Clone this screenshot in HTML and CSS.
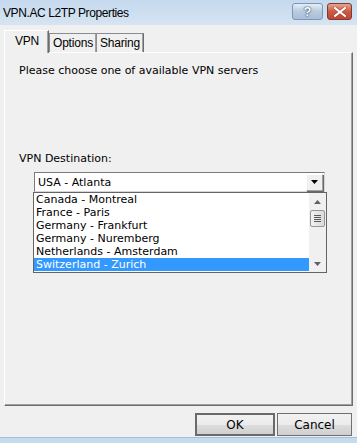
FILE: index.html
```html
<!DOCTYPE html>
<html lang="en">
<head>
  <meta charset="UTF-8" />
  <title>VPN.AC L2TP Properties</title>
  <link rel="stylesheet" href="styles.css">
</head>
<body>
  <div class="window">
    <!-- Title bar -->
    <div class="titlebar">
      <span class="title">VPN.AC L2TP Properties</span>
      <div class="caption-btns">
        <div class="cap-btn help">?</div>
        <div class="cap-btn close">
          <svg width="14" height="10" viewBox="0 0 14 10">
            <path d="M2 1 L12 9 M12 1 L2 9" stroke="#7b3b30" stroke-width="3.4" stroke-linecap="square" opacity="0.5"/>
            <path d="M2 1 L12 9 M12 1 L2 9" stroke="#fff" stroke-width="2" stroke-linecap="square"/>
          </svg>
        </div>
      </div>
    </div>

    <div class="body">
      <div class="tabs">
        <div class="tab active">VPN</div>
        <div class="tab">Options</div>
        <div class="tab">Sharing</div>
      </div>

      <div class="panel">
        <p class="intro">Please choose one of available VPN servers</p>
        <label class="dest-label">VPN Destination:</label>

        <div class="combo">
          <div class="combo-field">
            <span>USA - Atlanta</span>
            <div class="combo-arrow">
              <svg width="7" height="4" viewBox="0 0 7 4"><path d="M0 0 H7 L3.5 4 Z" fill="#000"/></svg>
            </div>
          </div>
          <div class="dropdown">
            <ul class="options">
              <li>Canada - Montreal</li>
              <li>France - Paris</li>
              <li>Germany - Frankfurt</li>
              <li>Germany - Nuremberg</li>
              <li>Netherlands - Amsterdam</li>
              <li class="selected">Switzerland - Zurich</li>
            </ul>
            <div class="scrollbar">
              <div class="sb-arrow">
                <svg width="7" height="4" viewBox="0 0 7 4"><path d="M0 4 H7 L3.5 0 Z" fill="#606060"/></svg>
              </div>
              <div class="sb-track">
                <div class="sb-thumb">
                  <span></span><span></span><span></span><span></span>
                </div>
              </div>
              <div class="sb-arrow">
                <svg width="7" height="4" viewBox="0 0 7 4"><path d="M0 0 H7 L3.5 4 Z" fill="#606060"/></svg>
              </div>
            </div>
          </div>
        </div>
      </div>

      <div class="actions">
        <button class="btn default">OK</button>
        <button class="btn">Cancel</button>
      </div>
    </div>
    <div class="bottom-frame"></div>
  </div>
</body>
</html>
```

FILE: styles.css
```css
* {
  box-sizing: border-box;
}

body {
  margin: 0;
  font-family: Tahoma, 'DejaVu Sans', 'Liberation Sans', sans-serif;
  font-size: 11px;
  color: #000;
}

.window {
  width: 357px;
  height: 443px;
  background: #f0f0f0;
  display: flex;
  flex-direction: column;
}

.titlebar {
  height: 25px;
  background: linear-gradient(to bottom, #c5d9ee, #d6e4f2);
  display: flex;
  align-items: center;
  justify-content: space-between;
  padding: 0 5px 0 3px;
}

.title {
  font-family: 'Segoe UI', 'Liberation Sans', sans-serif;
  font-size: 12px;
  letter-spacing: -0.4px;
  color: #000;
}

.caption-btns {
  display: flex;
  gap: 4px;
  align-self: flex-start;
  margin-top: 3px;
}

.cap-btn {
  height: 17px;
  border-radius: 3px;
  display: flex;
  align-items: center;
  justify-content: center;
}

.cap-btn.help {
  width: 31px;
  background: linear-gradient(to bottom, #e5eef8, #b8cbe0 50%, #a9bfd8);
  border: 1px solid #7f96b3;
  color: #fff;
  font-family: 'Liberation Sans', sans-serif;
  font-weight: bold;
  font-size: 13px;
  text-shadow: 0 0 2px #2c4260, 0 0 1px #2c4260;
}

.cap-btn.close {
  width: 25px;
  background: linear-gradient(to bottom, #e6a591, #cf5a43 50%, #c44531);
  border: 1px solid #7b3b30;
}

.body {
  flex: 1;
  padding: 4px 4px 0 4px;
  display: flex;
  flex-direction: column;
}

.tabs {
  display: flex;
  align-items: flex-end;
  height: 23px;
  padding-left: 1px;
  font-family: 'Liberation Sans', sans-serif;
  font-size: 12px;
  letter-spacing: -0.2px;
}

.tab {
  height: 19px;
  padding: 2px 3px 0 3px;
  background: #f0f0f0;
  border: 1px solid #898c95;
  border-bottom: none;
  border-right-color: #6d6d6d;
  margin-right: -1px;
  box-shadow: inset -1px 0 #a0a0a0;
}

.tab.active {
  height: 23px;
  width: 45px;
  padding: 3px 0 0 10px;
  margin-left: -1px;
  margin-bottom: -1px;
  margin-right: 0;
  border-color: #fff;
  border-right-color: #6d6d6d;
  position: relative;
  z-index: 1;
}

.panel {
  height: 354px;
  border: 1px solid #fff;
  border-right-color: #6d6d6d;
  border-bottom-color: #6d6d6d;
  box-shadow: inset -1px -1px #a0a0a0;
  padding: 11px 0 0 14px;
}

.intro {
  margin: 0;
}

.dest-label {
  display: block;
  margin-top: 75px;
}

.combo {
  margin: 7px 0 0 14px;
  width: 294px;
}

.combo-field {
  height: 20px;
  border: 1px solid #7a7a7a;
  border-right-color: #d5d5d5;
  border-bottom-color: #d5d5d5;
  background: #fff;
  display: flex;
  align-items: center;
  justify-content: space-between;
  padding-left: 3px;
  font-size: 11px;
  margin-left: 1px;
  margin-right: 2px;
}

.combo-arrow {
  width: 17px;
  height: 17px;
  margin-right: 1px;
  border: 1px solid #a0a0a0;
  border-left-color: #fff;
  border-top-color: #fff;
  box-shadow: 1px 1px #696969;
  background: #f0f0f0;
  display: flex;
  align-items: center;
  justify-content: center;
}

.dropdown {
  height: 81px;
  border: 1px solid #646464;
  background: #fff;
  display: flex;
}

.options {
  list-style: none;
  margin: 0;
  padding: 0;
  flex: 1;
}

.options li {
  height: 13px;
  line-height: 13px;
  padding-left: 2px;
  font-size: 11px;
  white-space: nowrap;
}

.options li.selected {
  background: #3399ff;
  color: #fff;
}

.scrollbar {
  width: 17px;
  background: #f0f0f0;
  display: flex;
  flex-direction: column;
}

.sb-arrow {
  height: 17px;
  display: flex;
  align-items: center;
  justify-content: center;
}

.sb-track {
  flex: 1;
  padding: 0 1px;
}

.sb-thumb {
  height: 17px;
  border: 1px solid #979797;
  border-radius: 2px;
  background: linear-gradient(to right, #f2f2f2, #e6e6e6 50%, #dadada);
  display: flex;
  flex-direction: column;
  align-items: center;
  justify-content: center;
  gap: 1px;
}

.sb-thumb span {
  width: 7px;
  height: 1px;
  background: #5a5a5a;
}

.actions {
  display: flex;
  justify-content: flex-end;
  gap: 1px;
  padding: 7px 1px 0 0;
}

.btn {
  width: 75px;
  height: 23px;
  font-family: Tahoma, 'DejaVu Sans', 'Liberation Sans', sans-serif;
  font-size: 12px;
  background: linear-gradient(to bottom, #f2f2f2, #ebebeb 50%, #dddddd 51%, #cfcfcf);
  border: 1px solid #707070;
  border-radius: 0;
  padding: 0;
  color: #000;
}

.btn.default {
  width: 80px;
  border: 2px solid #6a6a6a;
  margin-right: 1px;
}

.bottom-frame {
  height: 6px;
  background: #c5dcef;
  border-top: 1px solid #9cc0e3;
}
```
